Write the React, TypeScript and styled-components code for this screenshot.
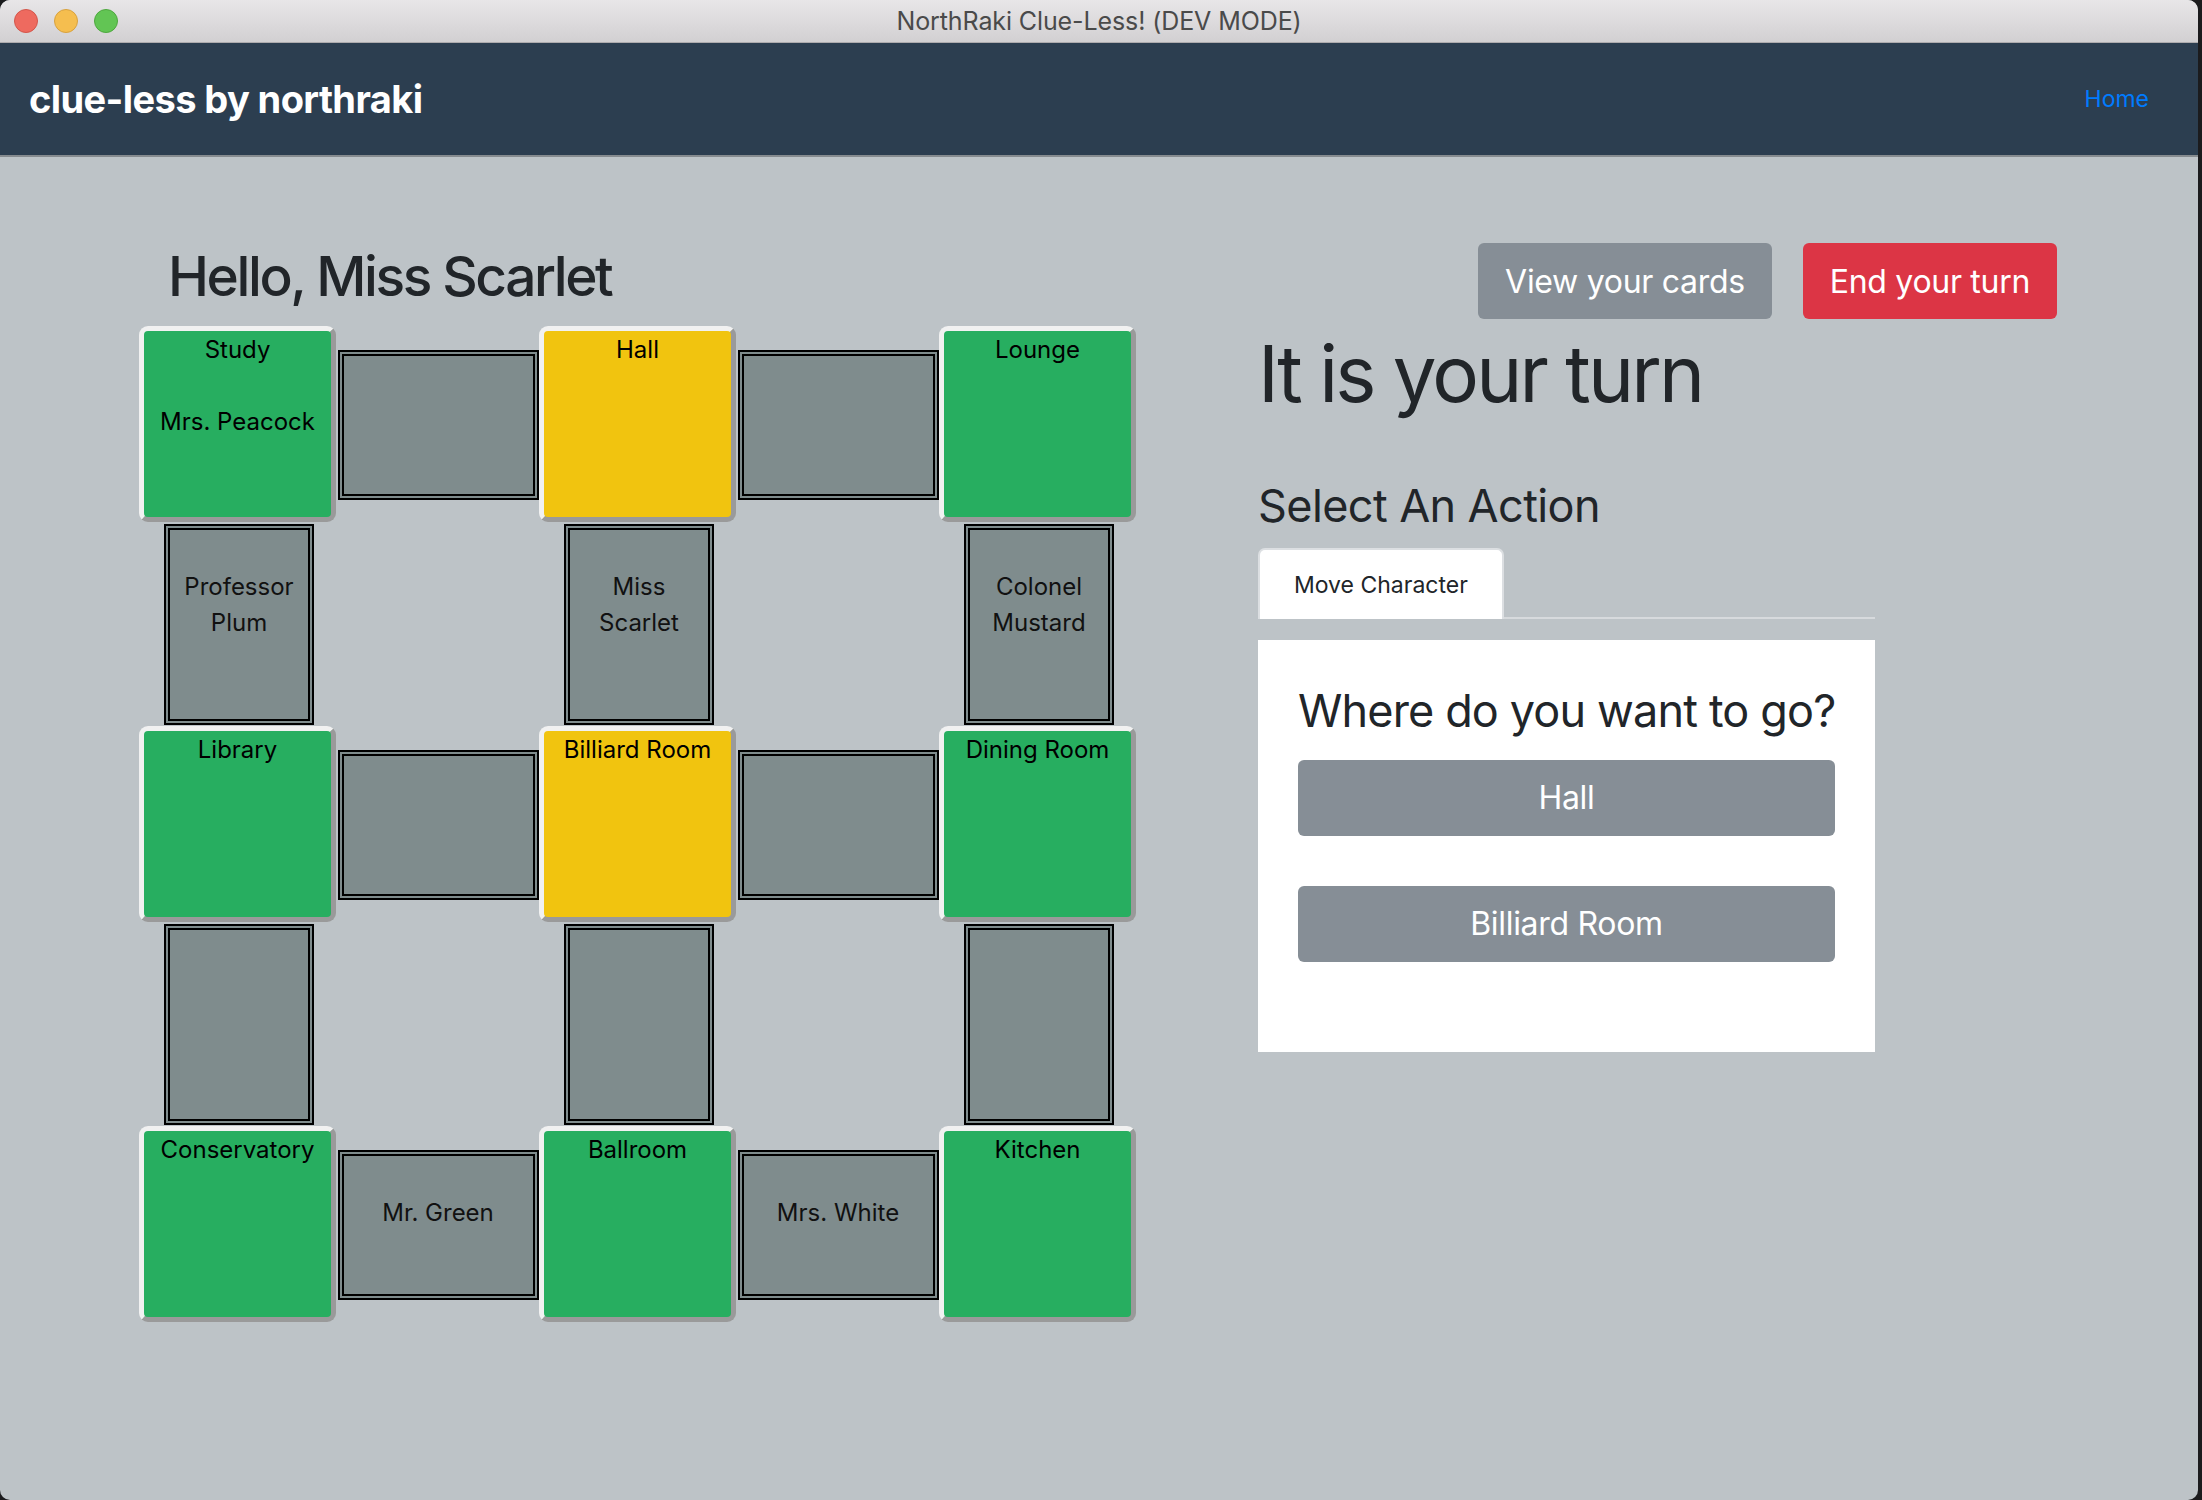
import styled, { createGlobalStyle } from "styled-components";

const GlobalStyle = createGlobalStyle`
  html, body {
    margin: 0;
    padding: 0;
    background: #1b1b1d;
  }
  * {
    box-sizing: border-box;
  }
`;

const Window = styled.div`
  width: 2198px;
  height: 1500px;
  display: flex;
  flex-direction: column;
  border-radius: 10px;
  overflow: hidden;
  font-family: "Inter", "Liberation Sans", sans-serif;
  background: #bdc3c7;
`;

const TitleBar = styled.div`
  height: 43px;
  flex-shrink: 0;
  display: grid;
  grid-template-columns: 1fr auto 1fr;
  align-items: center;
  background: linear-gradient(#e8e6e8, #d2d0d2);
  border-bottom: 1px solid #aeacae;
`;

const Lights = styled.div`
  display: flex;
  gap: 16px;
  padding-left: 14px;
`;

const Light = styled.span<{ $fill: string; $edge: string }>`
  width: 24px;
  height: 24px;
  border-radius: 50%;
  background: ${(p) => p.$fill};
  border: 1px solid ${(p) => p.$edge};
`;

const WindowTitle = styled.div`
  font-size: 25px;
  color: #4a4a4a;
  letter-spacing: -0.1px;
`;

const Navbar = styled.nav`
  height: 114px;
  flex-shrink: 0;
  display: flex;
  align-items: center;
  justify-content: space-between;
  padding: 0 49px 0 29px;
  background: #2c3e50;
  border-bottom: 2px solid #868b8f;
`;

const Brand = styled.div`
  color: #fff;
  font-size: 38px;
  font-weight: 700;
  letter-spacing: -0.6px;
`;

const NavLink = styled.a`
  color: #007bff;
  font-size: 23px;
  text-decoration: none;
`;

const Content = styled.main`
  flex: 1;
  display: flex;
  gap: 119px;
  padding: 86px 0 0 139px;
`;

const LeftColumn = styled.section`
  display: flex;
  flex-direction: column;
`;

const Greeting = styled.h1`
  margin: 0 0 17px 29px;
  font-size: 55px;
  font-weight: 500;
  line-height: 1.2;
  letter-spacing: -2.4px;
  color: #212529;
`;

const Board = styled.div`
  display: grid;
  grid-template-columns: repeat(5, 200px);
  grid-template-rows: repeat(5, 200px);
`;

const Room = styled.div<{ $color: string }>`
  width: 197px;
  height: 196px;
  background: ${(p) => p.$color};
  border: 5px solid;
  border-color: #f1f1f1 #9a9a9a #9a9a9a #f1f1f1;
  border-radius: 9px;
  padding-top: 1px;
  text-align: center;
  font-size: 24px;
  line-height: 36px;
  color: #000;
`;

const Hallway = styled.div<{ $dir: "h" | "v" }>`
  width: ${(p) => (p.$dir === "h" ? "201px" : "150px")};
  height: ${(p) => (p.$dir === "h" ? "150px" : "201px")};
  align-self: center;
  justify-self: center;
  margin-left: ${(p) => (p.$dir === "h" ? "-2px" : "0")};
  margin-top: ${(p) => (p.$dir === "v" ? "-3px" : "-2px")};
  background: #7f8c8d;
  border: 6px double #000;
  padding: 39px 8px 0;
  text-align: center;
  font-size: 24px;
  line-height: 36px;
  color: #111;
`;

const RoomName = styled.div`
  height: 72px;
`;

const RightColumn = styled.section`
  width: 799px;
  display: flex;
  flex-direction: column;
`;

const TopActions = styled.div`
  display: flex;
  justify-content: flex-end;
  gap: 31px;
`;

const Button = styled.button<{ $variant: "secondary" | "danger" }>`
  height: 76px;
  padding: 0 27px;
  border: none;
  border-radius: 6px;
  font-family: inherit;
  font-size: 32px;
  letter-spacing: -0.3px;
  color: #fff;
  background: ${(p) => (p.$variant === "danger" ? "#dc3545" : "#868e96")};
`;

const TurnHeading = styled.h1`
  margin: 8px 0 0;
  font-size: 78px;
  font-weight: 400;
  line-height: 1.2;
  letter-spacing: -2.8px;
  color: #212529;
`;

const SectionHeading = styled.h2`
  margin: 58px 0 15px;
  font-size: 45px;
  font-weight: 400;
  line-height: 1.2;
  letter-spacing: -0.6px;
  color: #212529;
`;

const Tabs = styled.div`
  width: 617px;
  display: flex;
  border-bottom: 2px solid #d7dadd;
`;

const Tab = styled.div`
  height: 71px;
  margin-bottom: -2px;
  padding: 2px 34px 0;
  display: flex;
  align-items: center;
  background: #fff;
  border: 2px solid #dcdfe2;
  border-bottom: none;
  border-radius: 7px 7px 0 0;
  font-size: 23px;
  color: #212529;
`;

const Card = styled.div`
  width: 617px;
  margin-top: 21px;
  padding: 44px 40px 40px;
  background: #fff;
`;

const CardTitle = styled.h2`
  margin: 0 0 22px;
  font-size: 45px;
  font-weight: 400;
  line-height: 1.2;
  letter-spacing: -0.85px;
  white-space: nowrap;
  color: #212529;
`;

const ChoiceButton = styled(Button)`
  display: block;
  width: 100%;
  margin-bottom: 50px;
`;

type Cell =
  | { kind: "room"; name: string; color: string; people: string[] }
  | { kind: "hall"; dir: "h" | "v"; people: string[] }
  | { kind: "empty" };

const GREEN = "#27ae60";
const YELLOW = "#f1c40f";

const room = (name: string, color = GREEN, people: string[] = []): Cell => ({
  kind: "room",
  name,
  color,
  people,
});
const hall = (dir: "h" | "v", people: string[] = []): Cell => ({
  kind: "hall",
  dir,
  people,
});
const empty: Cell = { kind: "empty" };

const board: Cell[] = [
  room("Study", GREEN, ["Mrs. Peacock"]),
  hall("h"),
  room("Hall", YELLOW),
  hall("h"),
  room("Lounge"),

  hall("v", ["Professor Plum"]),
  empty,
  hall("v", ["Miss Scarlet"]),
  empty,
  hall("v", ["Colonel Mustard"]),

  room("Library"),
  hall("h"),
  room("Billiard Room", YELLOW),
  hall("h"),
  room("Dining Room"),

  hall("v"),
  empty,
  hall("v"),
  empty,
  hall("v"),

  room("Conservatory"),
  hall("h", ["Mr. Green"]),
  room("Ballroom"),
  hall("h", ["Mrs. White"]),
  room("Kitchen"),
];

const renderCell = (cell: Cell, i: number) => {
  if (cell.kind === "room") {
    return (
      <Room key={i} $color={cell.color}>
        <RoomName>{cell.name}</RoomName>
        {cell.people.map((p) => (
          <div key={p}>{p}</div>
        ))}
      </Room>
    );
  }
  if (cell.kind === "hall") {
    return (
      <Hallway key={i} $dir={cell.dir}>
        {cell.people.map((p) => (
          <div key={p}>{p}</div>
        ))}
      </Hallway>
    );
  }
  return <div key={i} />;
};

const App = () => {
  return (
    <>
      <GlobalStyle />
      <Window>
        <TitleBar>
          <Lights>
            <Light $fill="#ee6a5f" $edge="#d2564b" />
            <Light $fill="#f5be4f" $edge="#d7a13f" />
            <Light $fill="#62c554" $edge="#4ea73f" />
          </Lights>
          <WindowTitle>NorthRaki Clue-Less! (DEV MODE)</WindowTitle>
          <div />
        </TitleBar>
        <Navbar>
          <Brand>clue-less by northraki</Brand>
          <NavLink href="#">Home</NavLink>
        </Navbar>
        <Content>
          <LeftColumn>
            <Greeting>Hello, Miss Scarlet</Greeting>
            <Board>{board.map(renderCell)}</Board>
          </LeftColumn>
          <RightColumn>
            <TopActions>
              <Button $variant="secondary">View your cards</Button>
              <Button $variant="danger">End your turn</Button>
            </TopActions>
            <TurnHeading>It is your turn</TurnHeading>
            <SectionHeading>Select An Action</SectionHeading>
            <Tabs>
              <Tab>Move Character</Tab>
            </Tabs>
            <Card>
              <CardTitle>Where do you want to go?</CardTitle>
              <ChoiceButton $variant="secondary">Hall</ChoiceButton>
              <ChoiceButton $variant="secondary">Billiard Room</ChoiceButton>
            </Card>
          </RightColumn>
        </Content>
      </Window>
    </>
  );
};

export default App;
